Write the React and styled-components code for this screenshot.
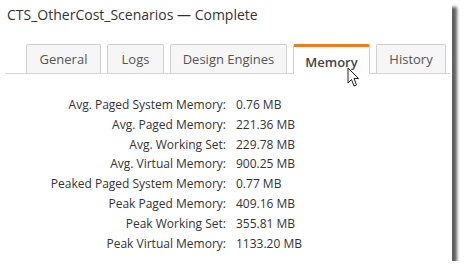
import styled, { createGlobalStyle } from "styled-components"

const GlobalStyle = createGlobalStyle`
    body {
        margin: 0;
        background: #fff;
        font-family: "Open Sans", "Liberation Sans", sans-serif;
    }
`

const tabs = [
    { name: "General", w: 75 },
    { name: "Logs", w: 57 },
    { name: "Design Engines", w: 117 },
    { name: "Memory", w: 77, active: true },
    { name: "History", w: 70 },
]

const rows = [
    ["Avg. Paged System Memory:", "0.76 MB"],
    ["Avg. Paged Memory:", "221.36 MB"],
    ["Avg. Working Set:", "229.78 MB"],
    ["Avg. Virtual Memory:", "900.25 MB"],
    ["Peaked Paged System Memory:", "0.77 MB"],
    ["Peak Paged Memory:", "409.16 MB"],
    ["Peak Working Set:", "355.81 MB"],
    ["Peak Virtual Memory:", "1133.20 MB"],
]

export default function App() {
    return (
        <>
            <GlobalStyle />
            <Frame>
                <Title>CTS_OtherCost_Scenarios — Complete</Title>
                <TabBar>
                    {tabs.map((t) => (
                        <Tab key={t.name} $w={t.w} $active={t.active}>
                            {t.name}
                            {t.active && (
                                <Cursor width="13" height="21" viewBox="0 0 13 21">
                                    <path d="M1 1 L1 16 L4.5 12.5 L7 19 L9.5 18 L7 11.5 L11.5 11.5 Z" fill="#fff" stroke="#222" strokeWidth="1" strokeLinejoin="round" />
                                </Cursor>
                            )}
                        </Tab>
                    ))}
                </TabBar>
                <Stats>
                    {rows.map(([label, value]) => (
                        <Row key={label}>
                            <Label>{label}</Label>
                            <Value>{value}</Value>
                        </Row>
                    ))}
                </Stats>
            </Frame>
        </>
    )
}

const Frame = styled.div`
    width: 452px;
    height: 261px;
    background: #fff;
    box-shadow: 6px 6px 3px -1px rgba(0, 0, 0, 0.62);
`

const Title = styled.h1`
    margin: 0;
    padding: 5px 0 0 7px;
    font-size: 14px;
    font-weight: 400;
    line-height: 19px;
    color: #333;
`

const TabBar = styled.div`
    display: flex;
    align-items: flex-end;
    gap: 6px;
    margin: 20px 2px 0 5px;
    padding-left: 21px;
    border-bottom: 1px solid #d4d4d4;
`

const Tab = styled.div`
    position: relative;
    box-sizing: border-box;
    width: ${(p) => p.$w}px;
    height: ${(p) => (p.$active ? 30 : 29)}px;
    margin-bottom: ${(p) => (p.$active ? -1 : 0)}px;
    display: flex;
    align-items: center;
    justify-content: center;
    border: 1px solid #cfcfcf;
    border-bottom: none;
    border-top: ${(p) => (p.$active ? "3px solid #f07a1f" : "1px solid #cfcfcf")};
    border-radius: 2px 2px 0 0;
    background: ${(p) => (p.$active ? "#fff" : "#f6f6f6")};
    color: ${(p) => (p.$active ? "#444" : "#555")};
    font-size: 13px;
    font-weight: ${(p) => (p.$active ? 600 : 400)};
    padding-top: ${(p) => (p.$active ? 3 : 0)}px;
`

const Cursor = styled.svg`
    position: absolute;
    left: 53px;
    top: 20px;
`

const Stats = styled.div`
    display: flex;
    flex-direction: column;
    padding-top: 21px;
`

const Row = styled.div`
    display: grid;
    grid-template-columns: 226px auto;
    column-gap: 10px;
    height: 19.8px;
    line-height: 19.8px;
    font-size: 12px;
    color: #333;
`

const Label = styled.span`
    text-align: right;
`

const Value = styled.span``
